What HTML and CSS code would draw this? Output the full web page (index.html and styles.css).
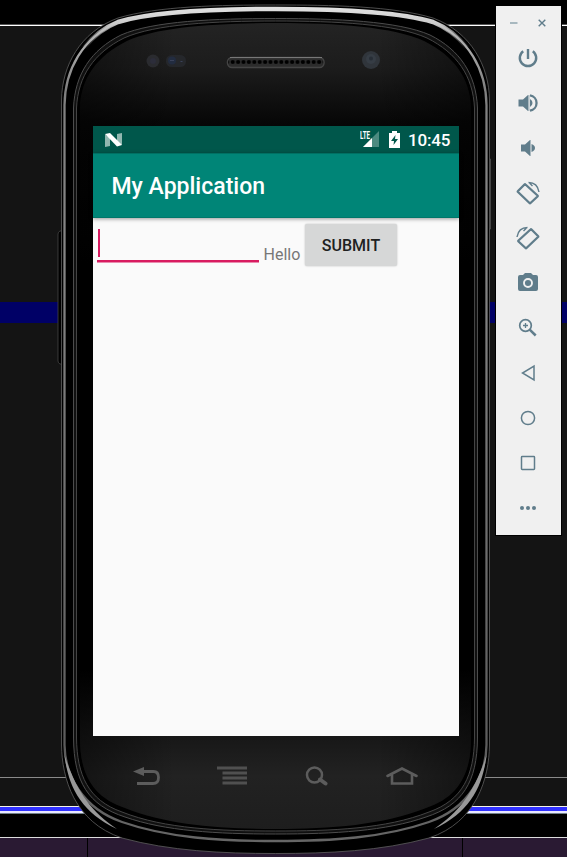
FILE: index.html
```
<!DOCTYPE html>
<html lang="en">
<head>
<meta charset="utf-8">
<title>Android Emulator</title>
<link rel="stylesheet" href="styles.css">
</head>
<body>
<main class="desktop">
  <section class="phone">
    <svg class="shell" width="567" height="857" viewBox="0 0 567 857" aria-hidden="true">
      <defs>
        <linearGradient id="face" x1="0" y1="19" x2="0" y2="833" gradientUnits="userSpaceOnUse">
          <stop offset="0" stop-color="#242424"/><stop offset=".06" stop-color="#1c1c1c"/>
          <stop offset=".13" stop-color="#060606"/><stop offset=".3" stop-color="#000"/>
          <stop offset=".8" stop-color="#000"/><stop offset=".88" stop-color="#171717"/>
          <stop offset=".93" stop-color="#222"/><stop offset="1" stop-color="#1d1d1d"/>
        </linearGradient>
        <linearGradient id="side" x1="74" x2="478" y1="0" y2="0" gradientUnits="userSpaceOnUse">
          <stop offset="0" stop-opacity=".45"/><stop offset=".25" stop-opacity="0"/>
          <stop offset=".75" stop-opacity="0"/><stop offset="1" stop-opacity=".45"/>
        </linearGradient>
        <linearGradient id="rim" x1="0" y1="5" x2="0" y2="842" gradientUnits="userSpaceOnUse">
          <stop offset="0" stop-color="#d8d8d8"/><stop offset=".04" stop-color="#b4b4b4"/>
          <stop offset=".1" stop-color="#808080"/><stop offset=".3" stop-color="#858585"/>
          <stop offset=".88" stop-color="#5c5c5c"/><stop offset="1" stop-color="#666"/>
        </linearGradient>
        <linearGradient id="crown" x1="0" y1="6" x2="0" y2="50" gradientUnits="userSpaceOnUse">
          <stop offset="0" stop-color="#e4e4e4"/><stop offset=".4" stop-color="#ccc"/><stop offset="1" stop-color="#999" stop-opacity="0"/>
        </linearGradient>
        <pattern id="mesh" x="230" y="58" width="5.4" height="8" patternUnits="userSpaceOnUse">
          <rect width="5.4" height="8" fill="#2c2c2c"/><circle cx="2.7" cy="4" r="2.1" fill="#000"/>
        </pattern>
      </defs>
      <path d="M63 231h-3q-2 1-2 3v127q0 2 2 3h3z" fill="#000" stroke="#444" stroke-width=".8"/>
      <path d="M488 159h2.500v70H488z" fill="#000" stroke="#555" stroke-width=".8"/>
      <path d="M61.500 100C62 66 80 32 118 18C158 6 220 5 275.500 5C331 5 393 6 433 18C471 32 489 66 489.500 100V745C489 778 477 822 429 838C381 851 329 853.500 275.500 853.500C222 853.500 170 851 122 838C74 822 62 778 61.500 745Z" fill="#000" stroke="#606060" stroke-width=".8"/>
      <path d="M64.500 105C65 70 82 38 118 22C155 11 220 9 275.500 9C331 9 396 11 433 22C469 38 486 70 486.500 105V745C486 775 469 808 429 822C383 838 331 841 275.500 841C220 841 168 838 122 822C82 808 65 775 64.500 745Z" fill="none" stroke="url(#rim)" stroke-width="2.300"/>
      <path d="M84 48Q98 30 118 22C155 11 220 9 275.500 9C331 9 396 11 433 22Q453 30 467 48" fill="none" stroke="url(#crown)" stroke-width="4.500"/>
      <path d="M64.500 755C68 785 80 812 117 829C90 811 76 790 64.500 755ZM486.500 755C483 785 471 812 434 829C461 811 475 790 486.500 755Z" fill="#999"/>
      <path d="M73.500 108C75 74 91 50 121 35C153 21 215 18.500 275.500 18.500C336 18.500 398 21 430 35C460 50 476 74 477.500 108V738C477 782 463 805 426 817C386 831 335 834 275.500 834C216 834 165 831 125 817C88 805 74 782 73.500 738Z" fill="#101010" stroke="#4c4c4c"/>
      <path d="M76.500 108C78 76 94 53 124 38C155 24 215 21 275.500 21C336 21 396 24 427 38C457 53 473 76 474.500 108V738C474 775 463 800 429 812C386 829 331 831 275.500 831C220 831 165 829 122 812C88 800 77 775 76.500 738Z" fill="#000" stroke="#444"/>
      <g>
        <path d="M80 108C81 78 97 56 127 41C157 27 215 23 275.500 23C336 23 394 27 424 41C454 56 470 78 471 108V738C471 773 459 797 426 808C383 825 331 829 275.500 829C220 829 168 825 125 808C92 797 80 773 80 738Z" fill="url(#face)"/>
        <path d="M80 108C81 78 97 56 127 41C157 27 215 23 275.500 23C336 23 394 27 424 41C454 56 470 78 471 108V738C471 773 459 797 426 808C383 825 331 829 275.500 829C220 829 168 825 125 808C92 797 80 773 80 738Z" fill="url(#side)"/>
      </g>
      <circle cx="153" cy="61" r="6.500" fill="#2a2b2f"/><circle cx="153" cy="61" r="3" fill="#2c2d3a"/>
      <rect x="166" y="55" width="20" height="12" rx="5.500" fill="#25272b"/><circle cx="172" cy="60.500" r="4" fill="#222c40"/><path d="M170 60.500h4M180.500 61.500h2" stroke="#3a425a"/>
      <rect x="227.500" y="57.500" width="96.500" height="10" rx="4.500" fill="url(#mesh)" stroke="#444" stroke-width="1.500"/>
      <path d="M230 57.500h92" stroke="#777"/>
      <circle cx="371" cy="60" r="9" fill="#30353b"/><circle cx="371" cy="59" r="5" fill="#363d45"/><circle cx="371" cy="58.500" r="2" fill="#272e36"/>
    </svg>
    <div class="screen">
      <header class="status">
        <svg class="nougat" width="18" height="14" viewBox="0 0 18 14"><path d="M0 1.500L5 5V13L0 14ZM12 1L17 0V12L12 9Z" fill="#91b7b0"/><path d="M0 1L5 0L17 12L12 13.500Z" fill="#fff"/></svg>
        <span class="network"><b class="lte">LTE</b><svg width="21" height="17" viewBox="0 0 21 17"><path d="M20 0V16H4Z" fill="#4c8a80"/><path d="M13 7V16H4Z" fill="#fff"/></svg></span>
        <svg class="battery" width="11" height="17" viewBox="0 0 11 17"><path d="M3 0h5v2h3v15H0V2h3z" fill="#fff"/><path d="M6.500 4L2 10h3L4.500 14L9 8H6z" fill="#00574b"/></svg>
        <time class="clock">10:45</time>
      </header>
      <div class="appbar"><h1 class="title">My Application</h1></div>
      <div class="content">
        <div class="field"><i class="caret"></i></div>
        <span class="hello">Hello</span>
        <button class="submit">SUBMIT</button>
      </div>
    </div>
    <nav class="keys">
      <svg width="28" height="20" viewBox="0 0 28 20"><path d="M10 5.500H20.500Q25.500 5.500 25.500 11.500Q25.500 17.500 20 17.500H4" fill="none" stroke="#5c5c5c" stroke-width="2.800"/><path d="M0 5.500L11 1V10Z" fill="#5c5c5c"/></svg>
      <svg width="30" height="20" viewBox="0 0 30 20"><path d="M0 2H30M5.500 7H30M5.500 12H30M5.500 17H30" stroke="#505050" stroke-width="2.800"/></svg>
      <svg width="24" height="20" viewBox="0 0 24 20"><circle cx="10.500" cy="9" r="7.500" fill="none" stroke="#5c5c5c" stroke-width="2.500"/><path d="M16 13.500L21.500 17.500" stroke="#5c5c5c" stroke-width="4" stroke-linecap="round"/></svg>
      <svg width="32" height="20" viewBox="0 0 32 20"><path d="M1.500 10L16 2.500L30.500 10M6 9V17.500H26V9" fill="none" stroke="#5c5c5c" stroke-width="2.600" stroke-linecap="round"/></svg>
    </nav>
  </section>
  <aside class="toolbar">
    <div class="window-controls">
      <svg width="8" height="8" viewBox="0 0 8 8"><path d="M0 4H7.500" stroke="#a0b1b9" stroke-width="1.800"/></svg>
      <svg width="8" height="8" viewBox="0 0 8 8"><path d="M.7 .7L7.300 7.300M7.300 .7L.7 7.300" stroke="#607d8b" stroke-width="1.400"/></svg>
    </div>
    <svg class="tool" viewBox="0 0 24 24"><path d="M12 3V13M7.200 5.200A8.200 8.200 0 1 0 16.800 5.200" fill="none" stroke="#607d8b" stroke-width="2.400"/></svg>
    <svg class="tool" viewBox="0 0 24 24"><path d="M2.500 8.500H7L12 4V20L7 15.500H2.500Z" fill="#607d8b"/><path d="M12 4h1.500v16H12z" fill="#a9b8bf"/><path d="M14 8Q16.500 9.500 16.500 12Q16.500 14.500 14 16Z" fill="#607d8b"/><path d="M14 4.300A7.800 7.800 0 0 1 14 19.700" fill="none" stroke="#607d8b" stroke-width="2.300"/></svg>
    <svg class="tool" viewBox="0 0 24 24"><path d="M5 8.500H9L14 4V20L9 15.500H5Z" fill="#607d8b"/><path d="M14 4h1v16h-1z" fill="#a9b8bf"/><path d="M15.500 8Q19 9.500 19 12Q19 14.500 15.500 16Z" fill="#607d8b"/></svg>
    <svg class="tool" viewBox="0 0 24 24"><path d="M8.500 3.500L2 10Q1.500 10.500 2 11L13.500 22Q14 22.500 14.500 22L21.500 15.500Q22 15 21.500 14.500L9.500 3.500Q9 3 8.500 3.500Z" fill="none" stroke="#607d8b" stroke-width="2.300"/><path d="M12.500 1.500Q21.500 1.500 23 11M13 1.500L16.500 5" fill="none" stroke="#607d8b" stroke-width="1.400"/></svg>
    <svg class="tool" viewBox="0 0 24 24"><g transform="matrix(-1 0 0 1 24 0)"><path d="M8.500 3.500L2 10Q1.500 10.500 2 11L13.500 22Q14 22.500 14.500 22L21.500 15.500Q22 15 21.500 14.500L9.500 3.500Q9 3 8.500 3.500Z" fill="none" stroke="#607d8b" stroke-width="2.300"/><path d="M12.500 1.500Q21.500 1.500 23 11M13 1.500L16.500 5" fill="none" stroke="#607d8b" stroke-width="1.400"/></g></svg>
    <svg class="tool" viewBox="0 0 24 24"><path d="M4 4H7L9 2H15L17 4H20Q22 4 22 6V18Q22 20 20 20H4Q2 20 2 18V6Q2 4 4 4Z" fill="#607d8b"/><circle cx="12" cy="12" r="4" fill="none" stroke="#f0f0f0" stroke-width="1.900"/></svg>
    <svg class="tool" viewBox="0 0 24 24"><circle cx="9.500" cy="9.500" r="5.800" fill="none" stroke="#607d8b" stroke-width="1.700"/><path d="M13.700 13.700L19.700 19.500" stroke="#607d8b" stroke-width="2.500"/><path d="M9.500 7v5M7 9.500h5" stroke="#607d8b" stroke-width="1.300"/></svg>
    <svg class="tool" viewBox="0 0 24 24"><path d="M18 5V19L6.500 12Z" fill="none" stroke="#607d8b" stroke-width="1.500"/></svg>
    <svg class="tool" viewBox="0 0 24 24"><circle cx="12" cy="12" r="6.600" fill="none" stroke="#607d8b" stroke-width="1.500"/></svg>
    <svg class="tool" viewBox="0 0 24 24"><rect x="5.500" y="5.500" width="13" height="13" rx=".7" fill="none" stroke="#607d8b" stroke-width="1.500"/></svg>
    <svg class="tool" viewBox="0 0 24 24"><g fill="#607d8b"><circle cx="6" cy="12" r="2"/><circle cx="12" cy="12" r="2"/><circle cx="18" cy="12" r="2"/></g></svg>
  </aside>
</main>
</body>
</html>
```

FILE: styles.css
```
* { box-sizing: border-box; }
body { margin: 0; background: #000; font-family: Roboto, sans-serif; }
.desktop {
  width: 567px;
  height: 857px;
  overflow: hidden;
  display: flex;
  align-items: flex-start;
  position: relative;
  background:
    linear-gradient(#000, #000) 87px 838px / 1px 19px no-repeat,
    linear-gradient(#000, #000) 462px 838px / 1px 19px no-repeat,
    linear-gradient(#000 24px, #555 24px 25px, #fff 25px 26px, #141414 26px 302px, #000066 302px 323px, #141414 323px 777px, #8a8a8a 777px 778px, #141414 778px 806px, #f2f2e8 806px 807px, #3030ff 807px 811px, #e8e8ff 811px 813px, #71808a 813px 814px, #000 814px 837px, #ddd 837px 838px, #2a1a33 838px);
}
.phone { width: 495px; height: 857px; padding: 126px 36px 0 93px; flex: none; }
.shell { position: absolute; left: 0; top: 0; }
.screen { position: relative; width: 366px; height: 610px; background: #fafafa; }
.status { height: 27px; background: #00574b; display: flex; align-items: center; padding: 0 9px 0 12px; color: #fff; }
.nougat { margin-top: 1px; }
.network { display: flex; align-items: flex-start; margin-left: auto; height: 17px; }
.lte { font: 700 10px/9px Roboto, sans-serif; width: 12px; transform: scaleX(.62); transform-origin: left; margin-right: -13px; }
.battery { margin-left: 9px; }
.clock { font-size: 17px; font-weight: 500; line-height: 28px; margin-left: 8px; width: 42px; text-align: right; letter-spacing: -.15px; padding-top: 1px; white-space: nowrap; }
.appbar { height: 65px; background: #008577; border-top: 1px solid #007063; border-bottom: 1px solid #00776a; box-shadow: 0 1px 4px rgba(0, 0, 0, .4); padding: 2px 18.500px 0; display: flex; align-items: center; }
.title { margin: 0; color: #fff; font-size: 23px; line-height: 28px; font-weight: 500; }
.content { display: flex; padding: 6px 4px; }
.field { width: 162px; height: 38px; border-bottom: 2.500px solid #d81b60; padding: 5px 0 0 1px; box-shadow: 0 .5px 0 #d81b60; }
.caret { display: block; width: 2px; height: 28px; background: #d81b60; }
.hello { color: #777; font-size: 16px; line-height: 20px; margin: 21px 0 0 4.500px; width: 41.500px; }
.submit { width: 92px; height: 42px; border: 0; border-radius: 2px; background: #d6d7d7; box-shadow: 0 0 2px rgba(0, 0, 0, .25); font: 500 16px/20px Roboto, sans-serif; color: #202121; padding: 2px 0 0; }
.keys { position: relative; display: flex; justify-content: space-between; width: 285px; margin: 29.500px 0 0 40px; }
.keys svg:nth-child(2) { margin-left: -2px; }
.toolbar { position: relative; flex: none; width: 67px; height: 531px; margin-top: 5px; background: #f0f0f0; border: 1px solid #000; display: flex; flex-direction: column; align-items: center; padding-right: 2px; }
.window-controls { display: flex; justify-content: space-between; width: 36px; height: 8px; margin: 13px 0 19px; }
.tool { display: block; width: 24px; height: 24px; margin-bottom: 21px; flex: none; }
```
